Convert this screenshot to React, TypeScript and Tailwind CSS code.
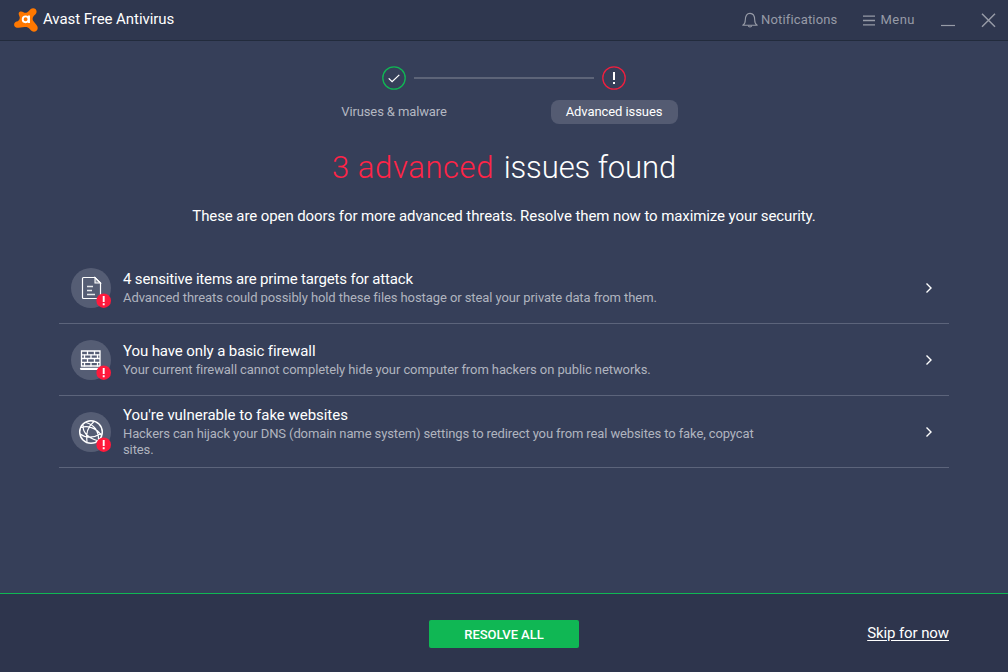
import type { ReactNode } from 'react';

interface Issue {
  title: string;
  description: string;
  icon: ReactNode;
  titleSpacing: string;
  textSpacing: string;
}

const AvastLogo = () => (
  <svg width="24" height="24" viewBox="0 0 24 24">
    <path
      fill="#ff7800"
      d="M5 4.600C6 2.900 8.300 3.500 9.500 4.300c1.500.9 3.500.6 4.800-.8l2.200-2.200c1.500-1.500 3.700-1.500 5-.2 1.500 1.500 1.400 3.800 0 5.100l-1.600 1.600c-1.500 1.500-1.700 3.600-.6 5.200l3.200 4c1.700 2 1.600 4.300 0 5.700-1.700 1.500-4.300 1.200-5.700-.4l-1.300-1.500c-1.300-1.500-3-2-5-1.700l-5.800.6C2.500 19.900.6 19 .2 17.400c-.4-1.800.7-3.300 2.300-3.800C4.600 12.900 6 11.500 5.700 9.300c-.2-1.600-1.600-3-.7-4.700z"
    />
    <circle cx="11.600" cy="11.300" r="2.900" fill="none" stroke="white" strokeWidth="1.900" />
    <path d="M15 7.500v7.600" stroke="white" strokeWidth="1.900" />
  </svg>
);

const BellIcon = () => (
  <svg width="16" height="16" viewBox="0 0 16 16" fill="none" stroke="currentColor" strokeWidth="1.1">
    <path d="M.8 13.300c1.700-1 2.500-2.800 2.500-5.300 0-4.200 1.700-6.600 4.700-6.600s4.700 2.400 4.700 6.600c0 2.500.8 4.300 2.500 5.300z" strokeLinejoin="round" />
    <path d="M6.300 13.600c.3 1.800 3.100 1.800 3.400 0" />
  </svg>
);

const DocumentIcon = () => (
  <svg width="40" height="40" viewBox="0 0 40 40" fill="none" stroke="white">
    <path d="M12.500 9.500H24l5.500 5.500v14.500a1 1 0 0 1-1 1h-16a1 1 0 0 1-1-1v-19a1 1 0 0 1 1-1z" strokeWidth="1.200" />
    <path d="M24 9.500V15h5.500z" fill="#fff" fillOpacity=".3" strokeWidth="1.100" />
    <path d="M16 18.500h6M16 22.500h5M16 26.500h8" strokeWidth="1.400" strokeOpacity=".85" />
  </svg>
);

const FirewallIcon = () => (
  <svg width="40" height="40" viewBox="0 0 40 40" fill="none" stroke="white" strokeWidth="1.300">
    <path d="M10.500 11h18.500v15h-18.500zM10.500 14.800h18.500M10.500 18.500h18.500M10.500 22.300h18.500" />
    <path d="M16.500 11v4M23.500 11v4M13.500 14.500v4M20 14.500v4M26.500 14.500v4M16.500 18.500v4M23.500 18.500v4M13.500 22.500v4M20 22.500v4M26.500 22.500v4" />
    <path d="M10 28.800h20" strokeWidth="2.200" strokeLinecap="round" />
  </svg>
);

const GlobeIcon = () => (
  <svg width="40" height="40" viewBox="0 0 40 40" fill="none" stroke="white" strokeWidth="1.500">
    <circle cx="20" cy="20" r="11.300" />
    <path
      d="M10 15.500c6-2 15-.5 20.500 8M15 10.500c8 2 13 8.500 12.500 18M23 9.500c-6 5-8.500 12-7 20.500M9.200 22c5 4 13 4.500 21-.5M12 12.500c-.5 7 4.500 13 14 16"
      strokeWidth="1.200"
    />
  </svg>
);

const issues: Issue[] = [
  {
    title: '4 sensitive items are prime targets for attack',
    description: 'Advanced threats could possibly hold these files hostage or steal your private data from them.',
    icon: <DocumentIcon />,
    titleSpacing: 'tracking-[-0.17px]',
    textSpacing: 'tracking-[-0.085px]',
  },
  {
    title: 'You have only a basic firewall',
    description: 'Your current firewall cannot completely hide your computer from hackers on public networks.',
    icon: <FirewallIcon />,
    titleSpacing: 'tracking-[-0.1px]',
    textSpacing: 'tracking-[-0.09px]',
  },
  {
    title: "You're vulnerable to fake websites",
    description:
      'Hackers can hijack your DNS (domain name system) settings to redirect you from real websites to fake, copycat sites.',
    icon: <GlobeIcon />,
    titleSpacing: 'tracking-[-0.03px]',
    textSpacing: 'tracking-[-0.115px]',
  },
];

function Header() {
  return (
    <header className="flex h-[41px] shrink-0 items-center border-b border-[#222b3c] bg-[#2f374f] pr-3 pl-3.5 text-[#979ba7]">
      <AvastLogo />
      <span className="ml-[5px] -translate-y-px text-[15px] tracking-[-0.06px] text-white">Avast Free Antivirus</span>
      <button className="ml-auto flex items-center gap-[3px] text-[13px] tracking-[0.15px]">
        <BellIcon />
        Notifications
      </button>
      <button className="ml-[26px] flex items-center gap-[5px] text-[13px] tracking-[0.5px]">
        <svg width="12" height="11" viewBox="0 0 12 11" stroke="currentColor" strokeWidth="1.300">
          <path d="M0 1.200h12M0 5.500h12M0 9.800h12" />
        </svg>
        Menu
      </button>
      <button className="ml-[26px]" aria-label="Minimize">
        <svg width="14" height="14" viewBox="0 0 14 14" stroke="currentColor" strokeWidth="1.200">
          <path d="M0 12.500h14" />
        </svg>
      </button>
      <button className="ml-[26px]" aria-label="Close">
        <svg width="15" height="15" viewBox="0 0 15 15" stroke="currentColor" strokeWidth="1.500">
          <path d="M1 .7l13 13M14 .7l-13 13" />
        </svg>
      </button>
    </header>
  );
}

function Steps() {
  return (
    <div className="mt-[25px] w-[440px]">
      <div className="flex items-center justify-center gap-2">
        <svg width="24" height="24" viewBox="0 0 24 24" fill="none">
          <circle cx="12" cy="12" r="11.200" stroke="#10b754" strokeWidth="1.300" />
          <path d="M6.700 12.400l3.400 3.300 7.200-6.800" stroke="white" strokeWidth="1.300" />
        </svg>
        <div className="h-0.5 w-[180px] bg-[#5d6478]" />
        <svg width="24" height="24" viewBox="0 0 24 24" fill="none">
          <circle cx="12" cy="12" r="11.200" stroke="#ef1f3f" strokeWidth="1.300" />
          <path d="M12 6v8M12 16v2" stroke="white" strokeWidth="2" />
        </svg>
      </div>
      <div className="mt-2.5 grid grid-cols-2 justify-items-center text-[13px] leading-6">
        <span className="tracking-[-0.12px] text-[#b4b8c2]">Viruses &amp; malware</span>
        <span className="w-[127px] rounded-lg bg-[#545b72] text-center tracking-[-0.08px] text-white">Advanced issues</span>
      </div>
    </div>
  );
}

function IssueRow({ issue }: { issue: Issue }) {
  return (
    <li className="flex h-[72px] items-center border-b border-[#5c647b] pr-[15px] pl-3">
      <div className="relative size-10 shrink-0 rounded-full bg-[#555d74]">
        {issue.icon}
        {/* Alert badge */}
        <svg className="absolute right-0 bottom-0" width="15" height="15" viewBox="0 0 15 15">
          <circle cx="7.700" cy="7.700" r="7.300" fill="#ff1a3c" />
          <path d="M7.700 3v6M7.700 10.300v2" stroke="white" strokeWidth="1.900" />
        </svg>
      </div>
      <div className="ml-3 w-[650px]">
        <h2 className={`pb-0.5 text-[15px] leading-[18px] text-white ${issue.titleSpacing}`}>{issue.title}</h2>
        <p className={`text-[13px] leading-4 text-[#b0b4bf] ${issue.textSpacing}`}>{issue.description}</p>
      </div>
      <svg className="ml-auto" width="10" height="12" viewBox="0 0 10 12" fill="none" stroke="white" strokeWidth="1.400">
        <path d="M2.500 1.500l4.500 4.500-4.500 4.500" />
      </svg>
    </li>
  );
}

export default function App() {
  return (
    <div className="flex h-[672px] w-[1008px] flex-col overflow-hidden bg-[#363f59] font-['Roboto',sans-serif] text-white">
      <Header />

      <main className="flex grow flex-col items-center">
        <Steps />
        <h1 className="mt-5 text-[31px] leading-[48px] font-light">
          <span className="mr-0.5 tracking-[0.6px] text-[#ff2447]">3 advanced</span>{' '}
          <span className="tracking-[-0.1px]">issues found</span>
        </h1>
        <p className="mt-[13px] text-[15px] leading-[22px] tracking-[-0.088px]">
          These are open doors for more advanced threats. Resolve them now to maximize your security.
        </p>
        <ul className="mt-[25px] w-[890px]">
          {issues.map((issue) => (
            <IssueRow key={issue.title} issue={issue} />
          ))}
        </ul>
      </main>

      <footer className="grid h-[79px] shrink-0 grid-cols-3 items-center border-t border-[#10b754] bg-[#2e354d] px-[59px]">
        <button className="col-start-2 mt-0.5 h-7 w-[150px] justify-self-center rounded-xs bg-[#10b754] pt-0.5 text-[13px] font-medium tracking-[-0.05px]">
          RESOLVE ALL
        </button>
        <a className="justify-self-end text-[15px] tracking-[-0.1px] underline underline-offset-2">Skip for now</a>
      </footer>
    </div>
  );
}
